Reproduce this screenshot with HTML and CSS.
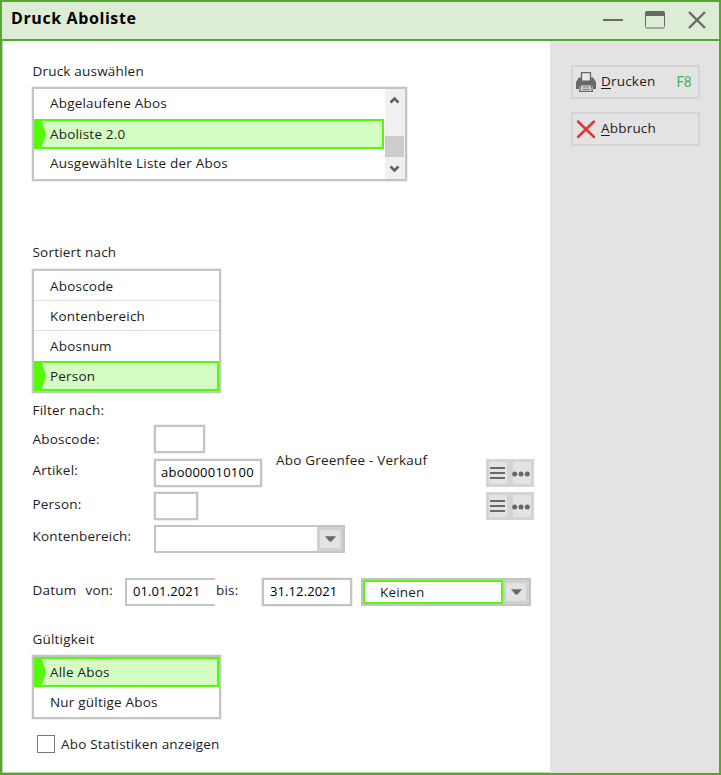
FILE: index.html
```html
<!DOCTYPE html>
<html lang="de">
<head>
<meta charset="utf-8">
<title>Druck Aboliste</title>
<link rel="stylesheet" href="styles.css">
</head>
<body>
<div class="window">
  <header class="titlebar">
    <h1>Druck Aboliste</h1>
    <div class="controls">
      <svg width="20" height="20" viewBox="0 0 20 20"><path d="M0 10h20" stroke="#686868" stroke-width="2"/></svg>
      <svg width="20" height="20" viewBox="0 0 20 20"><rect x=".5" y="2" width="19" height="16" rx="1.5" fill="none" stroke="#686868"/><path d="M0 6V3q0-2 2-2h16q2 0 2 2v3z" fill="#686868"/></svg>
      <svg class="close" width="18" height="20" viewBox="0 0 18 20"><path d="M1 2l16 16M17 2L1 18" stroke="#686868" stroke-width="2.3"/></svg>
    </div>
  </header>
  <div class="body">
    <main>
      <div class="label l-print">Druck auswählen</div>
      <div class="list list-print">
        <div class="rows">
          <div class="item">Abgelaufene Abos</div>
          <div class="item selected"><svg class="mark" width="12" height="30" viewBox="0 0 12 30"><path d="M0 0h8v3l4 12-4 12v3H0z" fill="#54fa0a"/></svg>Aboliste 2.0</div>
          <div class="item">Ausgewählte Liste der Abos</div>
        </div>
        <div class="scroll">
          <svg width="11" height="8" viewBox="0 0 11 8"><path d="M1.500 6.500l4-4 4 4" fill="none" stroke="#606060" stroke-width="2.600"/></svg>
          <div class="thumb"></div>
          <svg width="11" height="8" viewBox="0 0 11 8"><path d="M1.500 1.500l4 4 4-4" fill="none" stroke="#606060" stroke-width="2.600"/></svg>
        </div>
      </div>
      <div class="label l-sort">Sortiert nach</div>
      <div class="list list-sort">
        <div class="rows">
          <div class="item">Aboscode</div>
          <div class="item">Kontenbereich</div>
          <div class="item">Abosnum</div>
          <div class="item selected"><svg class="mark" width="12" height="30" viewBox="0 0 12 30"><path d="M0 0h8v3l4 12-4 12v3H0z" fill="#54fa0a"/></svg>Person</div>
        </div>
      </div>
      <div class="label l-filter">Filter nach:</div>
      <div class="row r-code"><span class="name">Aboscode:</span><div class="field w-code"></div></div>
      <div class="row r-article"><span class="name up">Artikel:</span><div class="field w-article">abo000010100</div><span class="desc">Abo Greenfee - Verkauf</span>
        <div class="pair">
          <div class="mini"><svg width="15" height="14" viewBox="0 0 15 14"><path d="M0 2h15M0 7h15M0 12h15" stroke="#686868" stroke-width="2"/></svg></div>
          <div class="mini"><svg class="dots" width="18" height="14" viewBox="0 0 18 14" fill="#686868"><circle cx="2.700" cy="8" r="2.500"/><circle cx="9" cy="8" r="2.500"/><circle cx="15.300" cy="8" r="2.500"/></svg></div>
        </div>
      </div>
      <div class="row r-person"><span class="name">Person:</span><div class="field w-person"></div>
        <div class="pair">
          <div class="mini"><svg width="15" height="14" viewBox="0 0 15 14"><path d="M0 2h15M0 7h15M0 12h15" stroke="#686868" stroke-width="2"/></svg></div>
          <div class="mini"><svg class="dots" width="18" height="14" viewBox="0 0 18 14" fill="#686868"><circle cx="2.700" cy="8" r="2.500"/><circle cx="9" cy="8" r="2.500"/><circle cx="15.300" cy="8" r="2.500"/></svg></div>
        </div>
      </div>
      <div class="row r-account"><span class="name up">Kontenbereich:</span>
        <div class="combo w-account"><div class="value"></div><div class="drop"><svg width="11" height="6" viewBox="0 0 11 6"><path d="M0 .3h11L6.500 5.500h-2z" fill="#686868"/></svg></div></div>
      </div>
      <div class="row r-date"><span class="datum">Datum</span><span class="von">von:</span><div class="field from">01.01.2021</div><span class="bis">bis:</span><div class="field to">31.12.2021</div>
        <div class="combo w-none"><div class="value focus">Keinen</div><div class="drop"><svg width="11" height="6" viewBox="0 0 11 6"><path d="M0 .3h11L6.500 5.500h-2z" fill="#686868"/></svg></div></div>
      </div>
      <div class="label l-valid">Gültigkeit</div>
      <div class="list list-valid">
        <div class="rows">
          <div class="item selected"><svg class="mark" width="12" height="30" viewBox="0 0 12 30"><path d="M0 0h8v3l4 12-4 12v3H0z" fill="#54fa0a"/></svg>Alle Abos</div>
          <div class="item">Nur gültige Abos</div>
        </div>
      </div>
      <div class="check"><span class="box"></span>Abo Statistiken anzeigen</div>
    </main>
    <aside>
      <div class="button">
        <svg width="20" height="20" viewBox="0 0 20 20"><path d="M5.500 9V.7h9V9" fill="#e8e8e8" stroke="#686868" stroke-width="1.300"/><path d="M2 7q0-1.500 1.500-1.500H5v3h10v-3h1.500Q18 5.500 18 7l2 3v7h-3l-1-4H4l-1 4H0v-7z" fill="#686868"/><path d="M5 13h10l1.500 6.300h-13z" fill="#e8e8e8" stroke="#686868" stroke-width="1.200"/><path d="M6.500 15h7M6 17.300h8" stroke="#686868"/></svg>
        <span class="caption"><span class="key">D</span>rucken</span><span class="hot">F8</span>
      </div>
      <div class="button">
        <svg width="20" height="20" viewBox="0 0 20 20"><path d="M2 2.500l16 15.500M18 2.500L2 18" stroke="#e03535" stroke-width="2.500" stroke-linecap="round"/></svg>
        <span class="caption"><span class="key">A</span>bbruch</span>
      </div>
    </aside>
  </div>
</div>
</body>
</html>
```
FILE: styles.css
```css
* { box-sizing: border-box; }
body { margin: 0; font: 13.5px/20px "Open Sans", sans-serif; letter-spacing: .2px; color: #1c1c1c; }
svg { display: block; flex: none; }
.window { width: 721px; height: 775px; border: 2px solid #57a532; box-shadow: inset 0 0 0 1px #b5d8a5; display: flex; flex-direction: column; background: #fff; }
.titlebar { height: 39px; flex: none; background: #ddecd5; border-bottom: 2px solid #57a532; display: flex; justify-content: space-between; padding: 0 13px 0 9px; }
h1 { margin: 6px 0 0; font-size: 16px; line-height: 20px; font-weight: 700; letter-spacing: .6px; color: #000; }
.controls { display: flex; gap: 22px; padding-top: 8px; }
.controls svg:nth-child(2) { margin-right: -1px; }
.close { margin-left: 2px; }
.body { display: flex; flex: 1; }
main { width: 548px; padding-left: 30px; white-space: nowrap; }
aside { flex: 1; background: #e3e3e3; padding: 24px 0 0 21px; }
.label { height: 20px; padding-left: .5px; }
.l-print { margin-top: 20px; }
.l-sort { margin-top: 61px; }
.l-filter { margin-top: 7px; }
.l-valid { margin-top: 23px; }
.list { border: 2px solid #c4c4c4; box-shadow: 0 0 0 .5px #ddd; display: flex; width: 189px; }
.list-print { width: 375px; height: 94px; margin-top: 6px; }
.list-sort { height: 124px; margin-top: 7px; }
.list-valid { height: 64px; margin-top: 6px; }
.rows { flex: 1; }
.item { height: 30px; line-height: 30px; padding-left: 16px; border-bottom: 1px solid #e0e0e0; position: relative; }
.item:last-child:not(.selected) { border-bottom: 0; }
.item:has(+ .selected) { border-bottom-color: #fff; }
.item.selected { background: #d5fdc3; border: 2px solid #54fa0a; line-height: 26px; padding-left: 14px; }
.list-print .item:not(.selected) { line-height: 29px; }
.mark { position: absolute; left: -2px; top: -2px; }
.scroll { width: 20px; margin-left: 1px; background: #f0f0f0; display: flex; flex-direction: column; align-items: center; padding: 7px 1px 6px 0; }
.thumb { width: 19px; height: 21px; margin-top: 32px; margin-bottom: 8px; background: #cdcdcd; }
.row { display: flex; align-items: center; height: 28px; position: relative; padding-left: .5px; }
.row > :first-child.name { width: 121.5px; }
.up { margin-top: -5px; }
.r-code .name { margin-top: -1px; }
.r-article .up { margin-top: -6px; }
.r-person .name { margin-top: -4px; }
.r-account .name { margin-top: -7px; }
.r-code { margin-top: 5px; }
.r-article { margin-top: 6px; }
.r-person { margin-top: 5px; }
.r-account { margin-top: 5px; }
.r-date { margin-top: 25px; }
.field { height: 28px; border: 2px solid #c4c4c4; box-shadow: 0 0 0 .5px #ddd; line-height: 22px; padding-left: 6px; background: #fff; color: #000; overflow: hidden; font-size: 13px; letter-spacing: .1px; }
.w-code { width: 51px; }
.w-article { width: 108px; line-height: 22px; padding-left: 5px; letter-spacing: .25px; }
.w-person { width: 44px; }
.desc { margin: -26px 0 0 14px; }
.pair { margin-left: auto; margin-right: 16px; display: flex; }
.mini { width: 24px; height: 28px; border: 3px solid #d4d4d4; background: #e3e3e3; display: flex; align-items: center; justify-content: center; }
.mini svg { margin-left: -3px; margin-right: -1px; }
.mini .dots { margin-left: -2px; margin-right: 0; flex: none; }
.combo { display: flex; height: 28px; border: 2px solid #c4c4c4; }
.w-account { width: 191px; }
.w-none { width: 170px; margin-left: 9px; }
.value { flex: 1; background: #fff; }
.focus { border: 2px solid #54fa0a; padding-left: 15px; line-height: 20px; }
.drop { width: 26px; border: 3px solid #d0d0d0; background: #e3e3e3; display: flex; align-items: center; justify-content: center; }
.datum { width: 53px; }
.von { width: 39.5px; }
.datum, .von, .bis { margin-top: -4px; }
.from { width: 90px; border-right: 0; box-shadow: none; }
.bis { width: 47px; padding-left: 1px; }
.to { width: 90px; }
.check { display: flex; align-items: center; margin: 15px 0 0 5px; height: 20px; }
.box { width: 18px; height: 18px; border: 1px solid #777; margin-right: 6px; }
.button { width: 129px; height: 34px; border: 2px solid #d4d4d4; display: flex; align-items: center; padding: 0 7px 0 3px; margin-bottom: 13px; }
.caption { margin: -2px 0 0 5px; }
.key { text-decoration: underline; text-underline-offset: 2px; }
.hot { margin-left: auto; color: #45b649; font-family: Roboto, sans-serif; font-size: 14px; letter-spacing: -.6px; }
```
